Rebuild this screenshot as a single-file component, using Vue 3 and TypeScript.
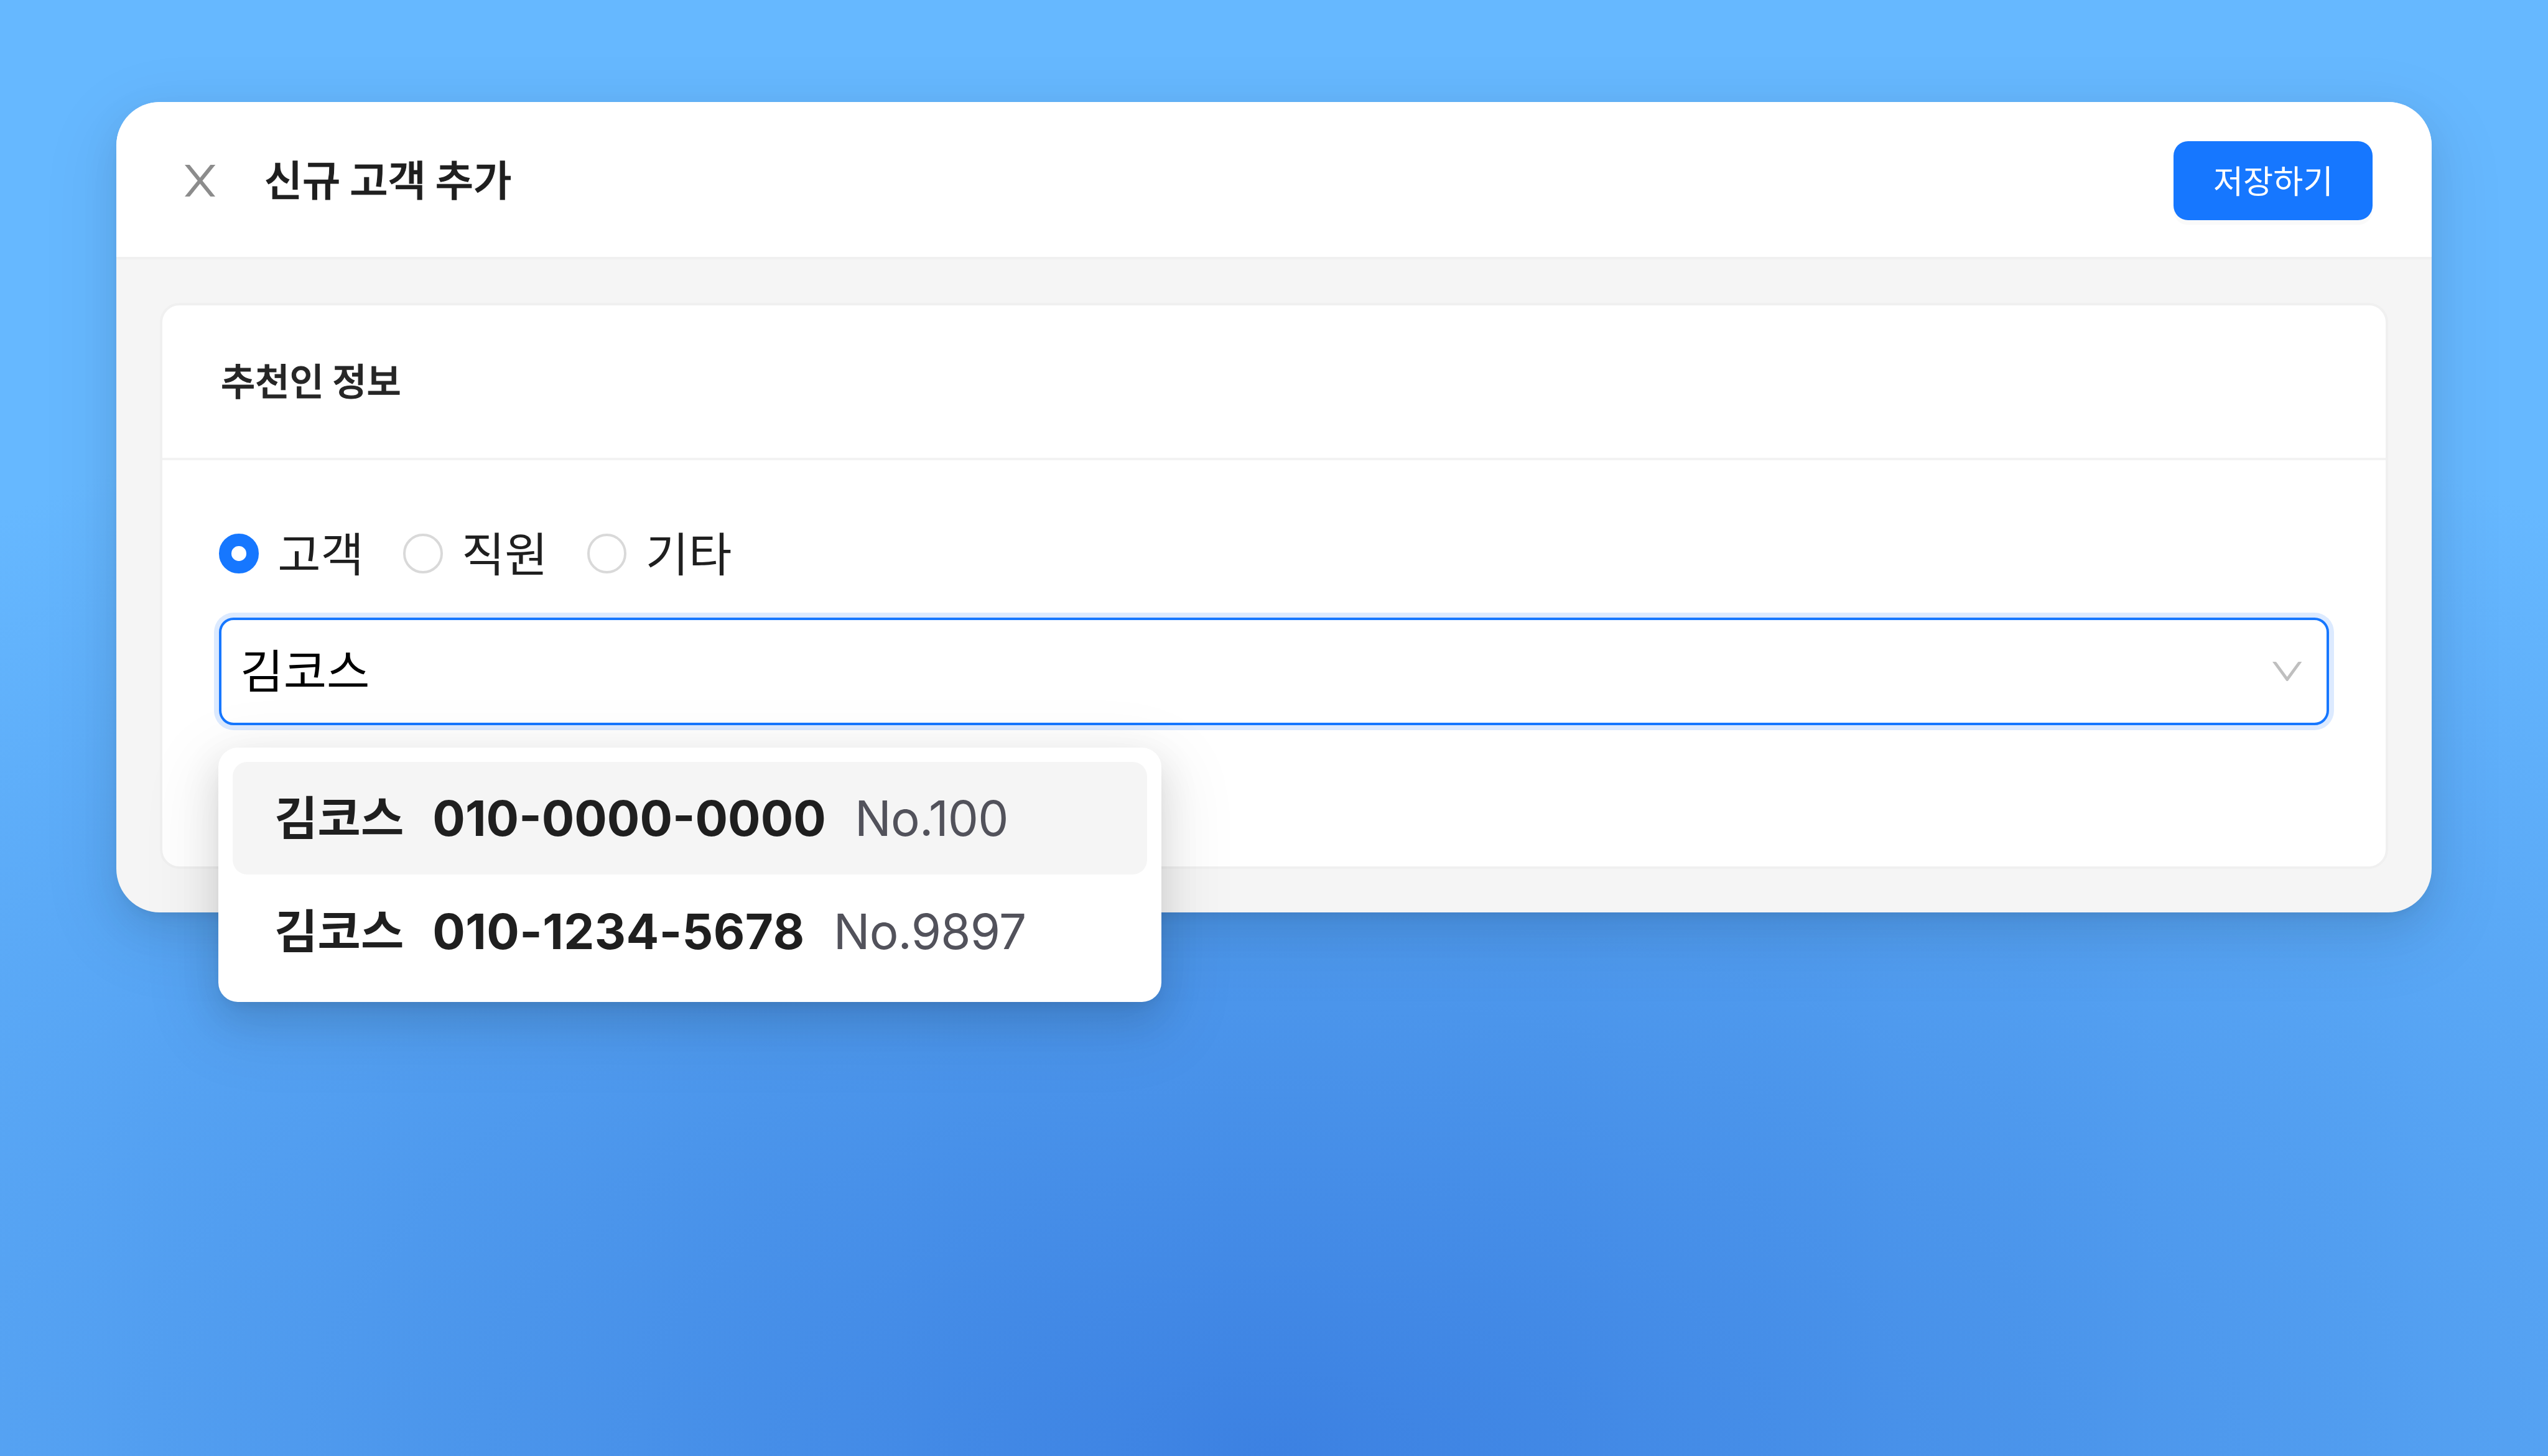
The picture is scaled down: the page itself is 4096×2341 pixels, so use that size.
<script setup lang="ts">
import { ref } from 'vue'

interface Customer {
  name: string
  phone: string
  no: string
  tracking: number
}

const referrerTypes = ['고객', '직원', '기타']
const selectedType = ref('고객')
const query = ref('김코스')
const activeIndex = ref(0)

const customers: Customer[] = [
  { name: '김코스', phone: '010-0000-0000', no: 'No.100', tracking: 0 },
  { name: '김코스', phone: '010-1234-5678', no: 'No.9897', tracking: 0.4 },
]
</script>

<template>
  <div class="stage">
    <section class="panel">
      <header class="panel-header">
        <svg class="close" viewBox="0 0 50.4 52.4" aria-label="닫기">
          <path d="M0 0H8L50.4 52.4H42.4Z" />
          <path d="M50.4 0H42.4L0 52.4H8Z" />
        </svg>
        <h1 class="title">신규 고객 추가</h1>
        <button class="save" type="button">저장하기</button>
      </header>

      <div class="panel-body">
        <div class="card">
          <h2 class="card-title">추천인 정보</h2>
          <div class="card-body">
            <div class="radios">
              <label v-for="type in referrerTypes" :key="type" class="radio" @click="selectedType = type">
                <span class="dot" :class="{ checked: type === selectedType }"></span>
                <span class="radio-text">{{ type }}</span>
              </label>
            </div>

            <div class="select">
              <div class="selector">
                <span class="query">{{ query }}</span>
                <svg class="arrow" viewBox="0 0 48.6 32.2">
                  <path
                    d="M0 0H4.6Q6 0 7 1.2L24.3 25 41.6 1.2Q42.6 0 44 0H48.6L26 31Q24.3 33.2 22.6 31Z"
                  />
                </svg>
              </div>
              <div class="dropdown">
                <div
                  v-for="(c, i) in customers"
                  :key="c.no"
                  class="option"
                  :class="{ active: i === activeIndex }"
                  @mouseenter="activeIndex = i"
                >
                  <span class="name">{{ c.name }}</span>
                  <span class="phone" :style="{ letterSpacing: c.tracking + 'px' }">{{ c.phone }}</span>
                  <span class="no">{{ c.no }}</span>
                </div>
              </div>
            </div>
          </div>
        </div>
      </div>
    </section>
  </div>
</template>

<style>
body {
  background: #3c80e2;
  overflow: hidden;
}
</style>

<style scoped>
* {
  box-sizing: border-box;
  margin: 0;
}

.stage {
  zoom: 0.97524;
  width: 4200px;
  height: 2401px;
  padding: 168px 192px 0;
  background: radial-gradient(3430px 1960px at 2100px 2400px, #3c81e2 0%, #4b95eb 38%, #66b8ff 100%);
  font-family: 'Noto Sans CJK KR', Inter, sans-serif;
  color: #1f1f1f;
  white-space: nowrap;
}

.panel {
  display: flex;
  flex-direction: column;
  height: 1336.4px;
  border-radius: 72px;
  background: #f5f5f5;
  box-shadow:
    0 24px 64px 0 rgba(0, 0, 0, 0.08),
    0 12px 24px -16px rgba(0, 0, 0, 0.12),
    0 36px 112px 32px rgba(0, 0, 0, 0.05);
}

.panel-header {
  display: flex;
  align-items: center;
  height: 259.8px;
  padding: 0 97px 0 112.6px;
  border-bottom: 4.2px solid #f0f0f0;
  border-radius: 72px 72px 0 0;
  background: #fff;
}

.close {
  width: 50.4px;
  height: 52.4px;
  margin-top: 4px;
  fill: #8c8c8c;
}

.title {
  margin-left: 80.6px;
  padding-bottom: 4px;
  font-size: 68.3px;
  font-weight: 500;
  line-height: 100px;
  -webkit-text-stroke: 1.2px currentColor;
}

.save {
  display: flex;
  align-items: center;
  justify-content: center;
  width: 328px;
  height: 130px;
  margin: 4px 0 0 auto;
  padding: 0 0 4.6px;
  border: 0;
  border-radius: 24px;
  background: #1677ff;
  box-shadow: 0 8px 0 rgba(0, 0, 0, 0.02);
  color: #fff;
  font-family: inherit;
  font-size: 53.7px;
  line-height: 80px;
}

.panel-body {
  display: flex;
  flex: 1;
  padding: 71.5px 72px 72px;
}

.card {
  flex: 1;
  border: 4.2px solid #f0f0f0;
  border-radius: 32px;
  background: #fff;
}

.card-title {
  display: flex;
  align-items: center;
  height: 255.5px;
  padding: 0 96px 8px;
  border-bottom: 4.2px solid #f2f2f2;
  color: #262626;
  font-size: 61.6px;
  font-weight: 500;
  -webkit-text-stroke: 1.1px currentColor;
}

.card-body {
  padding: 121.3px 93px 0;
}

.radios {
  display: flex;
  gap: 64.7px;
  height: 65.2px;
}

.radio {
  display: flex;
  align-items: center;
  gap: 31.2px;
}

.dot {
  width: 65.2px;
  height: 65.2px;
  border: 4.2px solid #d9d9d9;
  border-radius: 50%;
  background: #fff;
}

.dot.checked {
  border: 20.6px solid #1677ff;
}

.radio-text {
  padding-bottom: 6.8px;
  font-size: 77.3px;
  line-height: 65px;
}

.select {
  position: relative;
  margin-top: 72.6px;
}

.selector {
  display: flex;
  align-items: center;
  justify-content: space-between;
  height: 177.6px;
  padding: 0 40.4px 0 31px;
  border: 4.2px solid #1677ff;
  border-radius: 24px;
  background: #fff;
  box-shadow: 0 0 0 8.2px #dceaff;
}

.query {
  padding-bottom: 10.6px;
  color: #000;
  font-size: 77.3px;
  line-height: 110px;
}

.arrow {
  width: 48.6px;
  height: 32.2px;
  fill: #bfbfbf;
}

.dropdown {
  position: absolute;
  top: 214.4px;
  left: -1.2px;
  width: 1554.2px;
  padding: 23.3px;
  border-radius: 32px;
  background: #fff;
  box-shadow:
    0 24px 64px 0 rgba(0, 0, 0, 0.12),
    0 12px 24px -16px rgba(0, 0, 0, 0.12),
    0 36px 112px 32px rgba(0, 0, 0, 0.06);
}

.option {
  display: flex;
  align-items: center;
  gap: 47.2px;
  height: 186.4px;
  padding-left: 69.3px;
  border-radius: 24px;
}

.option.active {
  background: #f5f5f5;
}

.name {
  padding-bottom: 9.6px;
  font-size: 77.3px;
  font-weight: 700;
  line-height: 110px;
}

.phone,
.no {
  font-family: Inter, sans-serif;
  font-size: 80px;
  line-height: 110px;
}

.phone {
  font-weight: 700;
}

.no {
  color: #52525b;
  letter-spacing: -0.8px;
}
</style>
